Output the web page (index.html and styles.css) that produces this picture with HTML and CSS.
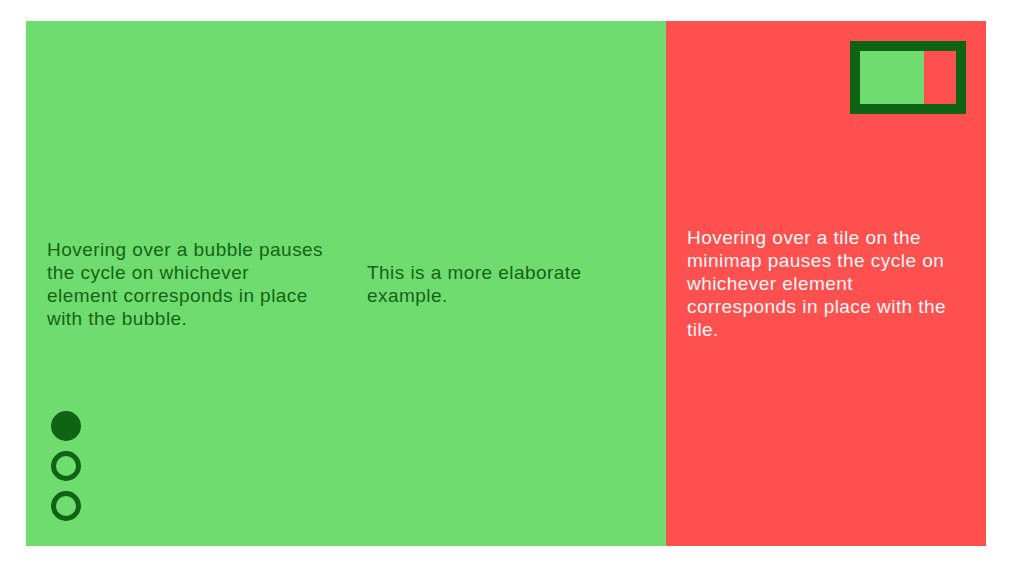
FILE: index.html
```html
<!DOCTYPE html>
<html>
<head>
<meta charset="utf-8">
<link rel="stylesheet" href="styles.css">
</head>
<body>
<div class="stage">
  <section class="panel green">
    <div class="col"><p>Hovering over a bubble pauses the cycle on whichever element corresponds in place with the bubble.</p></div>
    <div class="col"><p>This is a more elaborate example.</p></div>
    <nav class="bubbles">
      <span class="bubble on"></span>
      <span class="bubble"></span>
      <span class="bubble"></span>
    </nav>
  </section>
  <section class="panel red">
    <div class="col"><p>Hovering over a tile on the minimap pauses the cycle on whichever element corresponds in place with the tile.</p></div>
    <div class="minimap">
      <span class="tile tile-green"></span>
      <span class="tile tile-red"></span>
    </div>
  </section>
</div>
</body>
</html>
```
FILE: styles.css
```css
html, body {
  margin: 0;
  padding: 0;
  background: #ffffff;
}
body {
  padding: 21px 0 0 26px;
  font-family: "Liberation Sans", Arial, sans-serif;
}
.stage {
  width: 960px;
  height: 525px;
  display: flex;
}
.panel {
  position: relative;
  display: flex;
  height: 100%;
}
.green {
  width: 640px;
  background: #6fdc6f;
  color: #146414;
}
.red {
  width: 320px;
  background: #ff5050;
  color: #f8f8f8;
}
.col {
  width: 320px;
  box-sizing: border-box;
  padding: 0 22px 0 21px;
  display: flex;
  align-items: center;
}
.col p {
  margin: 0;
  font-size: 19px;
  letter-spacing: 0.45px;
  line-height: 23px;
}
.bubbles {
  position: absolute;
  left: 25px;
  bottom: 25px;
  display: flex;
  flex-direction: column;
  gap: 10px;
}
.bubble {
  width: 30px;
  height: 30px;
  box-sizing: border-box;
  border-radius: 50%;
  border: 5px solid #0f6414;
}
.bubble.on {
  background: #0f6414;
}
.minimap {
  position: absolute;
  top: 20px;
  right: 20px;
  display: flex;
  border: 10px solid #0f6414;
  height: 53px;
}
.tile {
  height: 100%;
}
.tile-green {
  width: 64px;
  background: #6fdc6f;
}
.tile-red {
  width: 32px;
  background: #ff5050;
}
```
